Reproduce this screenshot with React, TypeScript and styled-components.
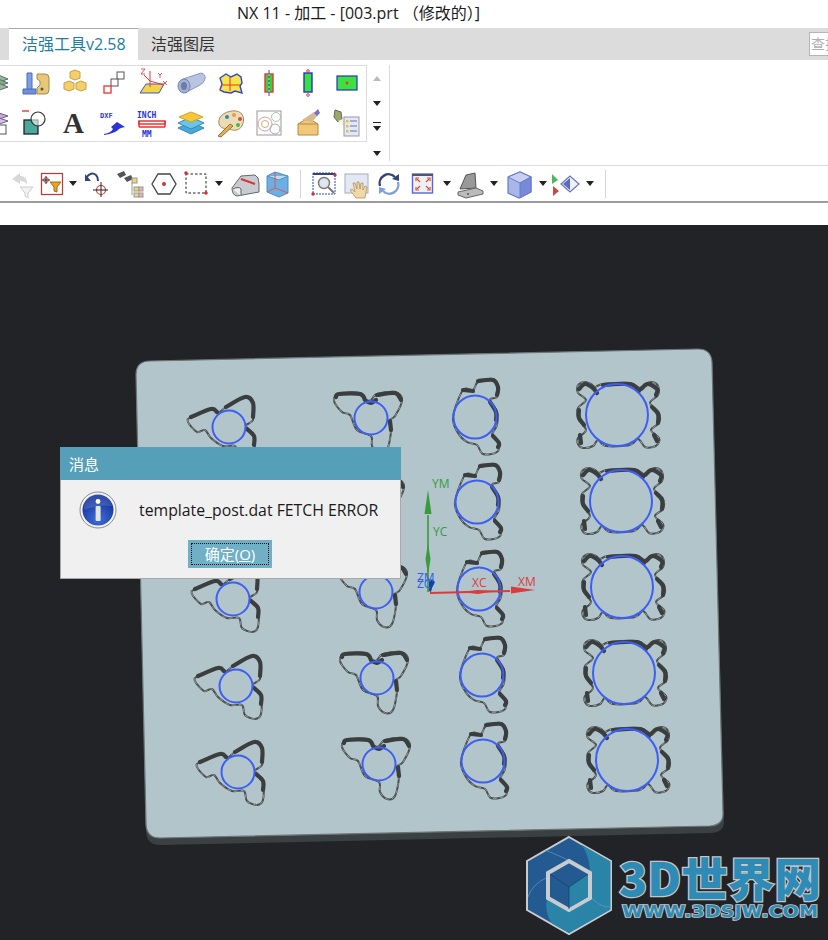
import React from "react";
import styled, { createGlobalStyle } from "styled-components";

const GlobalStyle = createGlobalStyle`
  html, body {
    margin: 0;
    padding: 0;
    background: #fff;
    font-family: "Open Sans", "Noto Sans CJK SC", sans-serif;
  }
  #root { width: 828px; height: 940px; overflow: hidden; }
`;

const Page = styled.div`
  width: 828px;
  height: 940px;
  display: flex;
  flex-direction: column;
  overflow: hidden;
`;

const TitleBar = styled.div`
  height: 28px;
  line-height: 27px;
  padding-left: 237px;
  font-size: 16px;
  color: #1a1a1a;
  white-space: nowrap;
`;

const TabBar = styled.div`
  height: 32px;
  background: #dcdcdc;
  display: flex;
  align-items: stretch;
  padding-left: 9px;
  font-size: 16px;
`;

const Tab = styled.div`
  padding: 0 13px;
  line-height: 33px;
  color: #333;
  white-space: nowrap;
`;

const ActiveTab = styled(Tab)`
  width: 129px;
  box-sizing: border-box;
  padding: 0 13px;
  background: #fff;
  border-top: 1px solid #aaa;
  line-height: 31px;
  color: #1c7da3;
`;

const SearchBox = styled.div`
  margin: 4px 0 4px auto;
  width: 19px;
  box-sizing: border-box;
  background: #fff;
  border: 1px solid #b5b5b5;
  border-right: none;
  font-size: 14px;
  line-height: 22px;
  color: #b0b0b0;
  padding-left: 1px;
  white-space: nowrap;
  overflow: hidden;
`;

const Ribbon = styled.div`
  height: 105px;
  box-sizing: border-box;
  padding-top: 5px;
  background: #fff;
  display: flex;
`;

const Gallery = styled.div`
  width: 367px;
  height: 77px;
  box-sizing: border-box;
  border: 1px solid #dcdcdc;
  border-left: none;
  overflow: hidden;
`;

const GalleryGrid = styled.div`
  margin-left: -24px;
  display: grid;
  grid-template-columns: repeat(10, 39px);
  grid-auto-rows: 34px;
  row-gap: 6px;
`;

const GalleryCell = styled.div`
  display: flex;
  align-items: center;
  justify-content: center;
`;

const IconSvg = styled.svg`
  width: 32px;
  height: 32px;
  flex: none;
  display: block;
`;

const GalleryGlyph = styled.div`
  font-family: "Liberation Serif", serif;
  font-size: 29px;
  font-weight: 700;
  line-height: 32px;
  color: #333;
`;

const SmallLabel = styled.text<{ $size: number; $color: string }>`
  font-family: "DejaVu Sans Mono", monospace;
  font-size: ${(p) => p.$size}px;
  font-weight: 700;
  fill: ${(p) => p.$color};
`;

const Scroller = styled.div`
  width: 20px;
  height: 100px;
  margin-right: 2px;
  display: flex;
  flex-direction: column;
  align-items: center;
  gap: 20px;
  padding-top: 11px;
  box-sizing: border-box;
`;

const UpArrow = styled.div`
  width: 0;
  height: 0;
  flex: none;
  border-left: 4px solid transparent;
  border-right: 4px solid transparent;
  border-bottom: 5px solid #bbb;
`;

const DownArrow = styled.div`
  width: 0;
  height: 0;
  flex: none;
  border-left: 4px solid transparent;
  border-right: 4px solid transparent;
  border-top: 5px solid #222;
`;

const LastArrow = styled(DownArrow)`
  position: relative;
  &::before {
    content: "";
    position: absolute;
    left: -4px;
    top: -9px;
    width: 8px;
    height: 1px;
    background: #222;
  }
`;

const RibbonDivider = styled.div`
  width: 1px;
  height: 96px;
  background: #dcdcdc;
`;

const Toolbar = styled.div`
  height: 38px;
  box-sizing: border-box;
  border-top: 1px solid #dcdcdc;
  border-bottom: 2px solid #9b9b9b;
  padding-left: 5px;
  display: flex;
  align-items: center;
`;

const ToolSlot = styled.div<{ $w: number }>`
  width: ${(p) => p.$w}px;
  flex: none;
  height: 32px;
  display: flex;
  align-items: center;
  justify-content: center;
`;

const ToolSeparator = styled.div`
  width: 1px;
  height: 28px;
  background: #d5d5d5;
`;

const Gap = styled.div`
  height: 22px;
  background: #fff;
`;

const Viewport = styled.div`
  position: relative;
  height: 715px;
  background: #212327;
`;

const SceneSvg = styled.svg`
  display: block;
  width: 828px;
  height: 715px;
`;

const AxisLabel = styled.text<{ $color: string }>`
  font-family: "Open Sans", sans-serif;
  font-size: 12px;
  fill: ${(p) => p.$color};
`;

const LogoTitle = styled.text`
  font-family: "Noto Sans CJK SC", sans-serif;
  font-size: 46px;
  font-weight: 900;
  fill: #2e8bb5;
  stroke: #c4c6c8;
  stroke-width: 2.5px;
  paint-order: stroke;
`;

const LogoUrl = styled.text`
  font-family: "DejaVu Sans", sans-serif;
  font-size: 15px;
  font-weight: 700;
  fill: #2e8bb5;
  stroke: #c4c6c8;
  stroke-width: 1.6px;
  paint-order: stroke;
`;

const Dialog = styled.div`
  position: absolute;
  left: 60px;
  top: 222px;
  width: 341px;
  height: 132px;
  box-sizing: border-box;
  background: #f0f0f0;
  border: 1px solid #a9a9a9;
  border-top: none;
`;

const DialogTitle = styled.div`
  height: 33px;
  margin: 0 -1px;
  padding-left: 9px;
  background: #559fb8;
  color: #fff;
  font-size: 15px;
  line-height: 34px;
`;

const DialogMessage = styled.div`
  display: flex;
  align-items: center;
  gap: 22px;
  padding: 11px 0 0 18px;
`;

const InfoSvg = styled.svg`
  width: 38px;
  height: 38px;
  flex: none;
`;

const MessageText = styled.div`
  font-size: 15.8px;
  color: #1a1a1a;
  white-space: nowrap;
`;

const OkButton = styled.div`
  width: 84px;
  height: 28px;
  box-sizing: border-box;
  margin: 11px 0 0 127px;
  padding: 3px;
  background: #6fb0c6;
`;

const OkInner = styled.div`
  height: 100%;
  box-sizing: border-box;
  border: 1px dotted #111;
  color: #fff;
  font-size: 15px;
  line-height: 20px;
  text-align: center;
`;

type Pt = [number, number];

// closed catmull-rom through the traced outline points
const smooth = (pts: Pt[], closed = true) => {
  const n = pts.length;
  const at = (i: number) => (closed ? pts[(i + n) % n] : pts[Math.max(0, Math.min(n - 1, i))]);
  let d = `M${pts[0][0]} ${pts[0][1]}`;
  const last = closed ? n : n - 1;
  for (let i = 0; i < last; i++) {
    const [p0, p1, p2, p3] = [at(i - 1), at(i), at(i + 1), at(i + 2)];
    const c1x = p1[0] + (p2[0] - p0[0]) / 6;
    const c1y = p1[1] + (p2[1] - p0[1]) / 6;
    const c2x = p2[0] - (p3[0] - p1[0]) / 6;
    const c2y = p2[1] - (p3[1] - p1[1]) / 6;
    d += ` C${c1x.toFixed(1)} ${c1y.toFixed(1)} ${c2x.toFixed(1)} ${c2y.toFixed(1)} ${p2[0]} ${p2[1]}`;
  }
  return d + (closed ? " Z" : "");
};

const partTypes: Record<string, { r: number; outline: Pt[]; thick: Pt[][] }> = {
  a: {
    r: 16.5,
    outline: [[-41, -5], [-38, -10], [-18, -18], [-11, -14], [-3, -20], [16, -30], [24, -24], [24, -7], [17, -1], [25, 9], [25, 28], [19, 33], [9, 29], [6, 19], [-6, 19], [-18, 11], [-24, 3], [-32, 5]],
    thick: [[[-38, -10], [-18, -18], [-12, -15]], [[-3, -20], [16, -30], [24, -24], [24, -10]], [[18, 2], [25, 9], [25, 18]]],
  },
  b: {
    r: 16.5,
    outline: [[-37, -17], [-32, -24], [-11, -25], [-5, -18], [0, -18], [6, -24], [24, -26], [31, -18], [24, -2], [18, 3], [20, 13], [16, 32], [8, 35], [1, 28], [0, 18], [-14, 12], [-21, -3], [-29, -6]],
    thick: [[[-35, -21], [-32, -24], [-11, -24], [-6, -18]], [[-5, -17], [0, -15], [5, -18]], [[6, -23], [24, -25], [30, -18]], [[19, 3], [20, 12]]],
  },
  c: {
    r: 21.5,
    outline: [[-22, 0], [-12, -27], [-2, -27], [3, -35], [18, -38], [23, -30], [22, -20], [15, -17], [22, -5], [22, 8], [17, 18], [24, 25], [22, 35], [8, 37], [2, 28], [-8, 25], [-17, 16]],
    thick: [[[3, -36], [18, -37], [23, -30], [22, -22]], [[-12, -27], [-2, -26]], [[15, -15], [21, -5], [21, 3]], [[18, 19], [24, 26], [23, 30]]],
  },
  d: {
    r: 31,
    outline: [[-40, -27], [-38, -31], [-32, -33], [-26, -31], [-22, -28], [-14, -31], [13, -32], [23, -27], [28, -31], [35, -33], [41, -29], [41, -20], [33, -12], [42, -2], [42, 8], [34, 15], [42, 23], [41, 29], [36, 32], [28, 32], [21, 24], [13, 30], [-11, 31], [-19, 25], [-24, 31], [-34, 33], [-39, 29], [-39, 23], [-31, 15], [-39, 3], [-39, -7], [-31, -15], [-39, -22]],
    thick: [[[-38, -26], [-32, -31], [-24, -27], [-20, -22]], [[-14, -30], [13, -31], [22, -24]], [[24, -26], [31, -31], [40, -26], [39, -20]], [[-38, -5], [-38, 3], [-33, 10]], [[35, -8], [41, -1], [41, 8]], [[-37, 20], [-36, 28]], [[37, 20], [40, 26]]],
  },
};

const parts: { t: string; x: number; y: number }[] = [
  { t: "a", x: 229, y: 427 }, { t: "a", x: 231, y: 513 }, { t: "a", x: 233, y: 599 }, { t: "a", x: 236, y: 686 }, { t: "a", x: 238, y: 772 },
  { t: "b", x: 371, y: 418 }, { t: "b", x: 373, y: 505 }, { t: "b", x: 376, y: 592 }, { t: "b", x: 377, y: 678 }, { t: "b", x: 379, y: 764 },
  { t: "c", x: 475, y: 417 }, { t: "c", x: 477, y: 502 }, { t: "c", x: 479, y: 589 }, { t: "c", x: 482, y: 675 }, { t: "c", x: 483, y: 761 },
  { t: "d", x: 617, y: 415 }, { t: "d", x: 621, y: 501 }, { t: "d", x: 622, y: 587 }, { t: "d", x: 624, y: 673 }, { t: "d", x: 627, y: 760 },
];

const Part = ({ t, x, y }: { t: string; x: number; y: number }) => {
  const spec = partTypes[t];
  const d = smooth(spec.outline);
  return (
    <g transform={`translate(${x} ${y})`} fill="none" strokeLinejoin="round" strokeLinecap="round">
      <path d={d} stroke="#4a4e4f" strokeWidth={2} />
      <path d={d} stroke="#a9b4b6" strokeWidth={0.7} strokeDasharray="3 4" />
      {spec.thick.map((seg, i) => (
        <path key={i} d={smooth(seg, false)} stroke="#3a3e3f" strokeWidth={4.2} />
      ))}
      <circle r={spec.r} stroke="#3d5ef5" strokeWidth={2} />
    </g>
  );
};

const Svg = ({ children }: { children: React.ReactNode }) => (
  <IconSvg viewBox="0 0 32 32">{children}</IconSvg>
);

const galleryIcons: React.ReactNode[] = [
  <Svg>
    <path d="M2 12l14-5 12 5-14 5z" fill="#8fbf8f" stroke="#667" />
    <path d="M2 16l14-5 12 5-14 5z" fill="#7fae86" stroke="#667" />
    <path d="M2 20l14-5 12 5-14 5z" fill="#8fbf8f" stroke="#667" />
  </Svg>,
  <Svg>
    <path d="M8 6h5v18H8z" fill="#7f9fe0" stroke="#4a68b8" />
    <path d="M4 22h13v5H4z" fill="#6f90d8" stroke="#4a68b8" />
    <path d="M18 7h8q4 0 4 4v12q0 4-4 4h-8v-6l3-3v-4l-3-2z" fill="#e8c878" stroke="#a58a4a" />
    <circle cx="23" cy="22" r="1.5" fill="#555" />
  </Svg>,
  <Svg>
    <path d="M12 5l5-2 5 2v6l-5 2-5-2z" fill="#f2cf6c" stroke="#c9a040" />
    <path d="M6 16l5-2 5 2v6l-5 2-5-2z" fill="#f2cf6c" stroke="#c9a040" />
    <path d="M18 16l5-2 5 2v6l-5 2-5-2z" fill="#f2cf6c" stroke="#c9a040" />
  </Svg>,
  <Svg>
    <rect x="20" y="5" width="7" height="7" fill="#fff" stroke="#555" />
    <rect x="14" y="12" width="7" height="7" fill="#fff" stroke="#555" />
    <rect x="7" y="19" width="7" height="7" fill="#fff" stroke="#e33" strokeWidth="1.3" />
  </Svg>,
  <Svg>
    <path d="M4 26l6-9h18l-5 9z" fill="#f0d44a" stroke="#4455bb" />
    <path d="M14 4v16M14 14l14 4M14 14l-6-6" stroke="#e33" fill="none" />
    <path d="M5 2h4l-4 5h4M22 6l2 2 2-2M24 8v3M27 14l4 4M31 14l-4 4" stroke="#d44" fill="none" strokeWidth="0.9" />
  </Svg>,
  <Svg>
    <path d="M8 12L26 6q5 1 4 6-1 4-5 6L10 26z" fill="#b9c4e4" stroke="#8c99bc" />
    <ellipse cx="9" cy="19" rx="6" ry="7" fill="#a3b1d8" stroke="#7482ab" />
    <ellipse cx="9" cy="19" rx="3" ry="4" fill="#6d7ca6" />
  </Svg>,
  <Svg>
    <path d="M6 11l6-4 5 3 6-3 4 3 1 6-2 3 2 7-7-2-4 2-7-1-4-2 2-6z" fill="#f4e54a" stroke="#3344cc" strokeWidth="1.4" />
    <path d="M16 10v14M7 18h19" stroke="#e33" strokeWidth="1" />
  </Svg>,
  <Svg>
    <rect x="12" y="7" width="8" height="18" fill="#38d040" stroke="#e33" strokeWidth="1.4" />
    <path d="M16 3v26" stroke="#2f45d0" strokeWidth="1" />
    <path d="M16 7v18" stroke="#ff0" strokeWidth="1" strokeDasharray="2 2" />
  </Svg>,
  <Svg>
    <rect x="12" y="6" width="8" height="19" fill="#38e040" stroke="#2233cc" strokeWidth="1.4" />
    <circle cx="16" cy="4" r="1.3" fill="none" stroke="#e33" />
    <circle cx="16" cy="28" r="1.3" fill="none" stroke="#e33" />
  </Svg>,
  <Svg>
    <rect x="6" y="9" width="20" height="14" fill="#3ee040" stroke="#2233cc" strokeWidth="1.2" />
    <circle cx="16" cy="16" r="1.4" fill="#e33" />
  </Svg>,
];

const galleryIcons2: React.ReactNode[] = [
  <Svg>
    <path d="M2 9l14-4 12 4-14 5z" fill="#c9a4e6" stroke="#667" />
    <path d="M2 14l14-4 12 4-14 5z" fill="#d9c0ec" stroke="#667" />
    <rect x="2" y="18" width="24" height="9" fill="#fff" stroke="#555" />
  </Svg>,
  <Svg>
    <rect x="5" y="13" width="14" height="14" fill="#4aa89c" stroke="#222" strokeWidth="1.3" />
    <circle cx="19" cy="12" r="7" fill="#fff" fillOpacity="0.6" stroke="#333" strokeWidth="1.2" />
    <path d="M3 4h7" stroke="#e33" strokeWidth="1.4" />
  </Svg>,
  <GalleryGlyph>A</GalleryGlyph>,
  <Svg>
    <SmallLabel x="3" y="11" $size={7} $color="#2a34d8">DXF</SmallLabel>
    <path d="M7 27q7-1 9-5l-2-2 6-5 8 5-4 1-2 1q-3 4-15 6z" fill="#2a34d8" />
  </Svg>,
  <Svg>
    <SmallLabel x="1" y="11" $size={8} $color="#2a34d8">INCH</SmallLabel>
    <path d="M3 14h26v3H3zM3 20h26" stroke="#e33" strokeWidth="1.5" fill="none" />
    <path d="M3 14v6M29 14v6" stroke="#e33" strokeWidth="1.5" />
    <SmallLabel x="6" y="30" $size={8} $color="#2a34d8">MM</SmallLabel>
  </Svg>,
  <Svg>
    <path d="M3 21l13-6 13 6-13 6z" fill="#48a9d8" stroke="#3388bb" />
    <path d="M3 16l13-6 13 6-13 6z" fill="#6cc4e4" stroke="#3388bb" />
    <path d="M4 10l12-5 12 5-12 5z" fill="#f6c838" stroke="#d9a020" />
  </Svg>,
  <Svg>
    <path d="M5 17C3 8 14 3 22 4c8 1 9 9 6 15-3 5-9 5-12 3-3-2-8 2-11-5z" fill="#eadcb8" stroke="#a68a56" />
    <circle cx="13" cy="10" r="2" fill="#38a" />
    <circle cx="20" cy="8" r="2" fill="#e94" />
    <circle cx="26" cy="12" r="2" fill="#d44" />
    <circle cx="24" cy="18" r="2" fill="#4b4" />
    <path d="M4 29l12-12 3 2-12 11z" fill="#e0b050" stroke="#987030" />
  </Svg>,
  <Svg>
    <rect x="4" y="4" width="24" height="24" fill="#fff" stroke="#aaa" strokeWidth="1.2" />
    <circle cx="12" cy="17" r="7" fill="none" stroke="#d9a0a0" />
    <circle cx="12" cy="17" r="3.5" fill="none" stroke="#c9b080" />
    <circle cx="23" cy="10" r="4.5" fill="none" stroke="#a0c8a8" />
    <circle cx="22" cy="22" r="5" fill="none" stroke="#a0a8c8" />
  </Svg>,
  <Svg>
    <path d="M6 17l10-6 10 6v11H6z" fill="#f0c878" stroke="#b58a40" />
    <path d="M6 17h20" stroke="#b58a40" />
    <path d="M10 13l12-8 4 3-6 7z" fill="#d8b890" />
    <path d="M22 6l4-4 2 4-3 3z" fill="#6f70c8" />
  </Svg>,
  <Svg>
    <path d="M4 3l6 2 1 7-4 3-4-5z" fill="#9aa86a" stroke="#666" />
    <path d="M7 14l9 8V10z" fill="#fbf5c8" />
    <rect x="13" y="10" width="15" height="19" fill="#e4e8f4" stroke="#8f98b8" />
    <path d="M19 14h7M19 19h7M19 24h7" stroke="#6a7298" />
    <rect x="15" y="13" width="2.5" height="2.5" fill="#e8c040" />
    <rect x="15" y="18" width="2.5" height="2.5" fill="#e8c040" />
    <rect x="15" y="23" width="2.5" height="2.5" fill="#e8c040" />
  </Svg>,
];

const toolIcons: Record<string, React.ReactNode> = {
  undoFilter: (
    <Svg>
      <path d="M15 5l-8 6 8 5v-3q6 0 7 4 1-9-7-9z" fill="#d8d8d8" />
      <path d="M15 19h13l-5 6v5l-3-2v-3z" fill="#f2f2f2" stroke="#ccc" />
    </Svg>
  ),
  selFilter: (
    <Svg>
      <rect x="5.5" y="5.5" width="21" height="21" fill="#fff" stroke="#c33" strokeWidth="1.2" />
      <path d="M10 8v8M6 12h8" stroke="#222" />
      <circle cx="10" cy="12" r="2.4" fill="none" stroke="#a33" />
      <path d="M14 14h11l-4 5v5l-3-1v-4z" fill="#f0a020" stroke="#a86a10" />
    </Svg>
  ),
  rotatePoint: (
    <Svg>
      <path d="M5 10q5-7 10-3 2 2 2 6" fill="none" stroke="#33447a" strokeWidth="2" />
      <path d="M4 6v7h6z" fill="#33447a" />
      <circle cx="20" cy="22" r="4.5" fill="none" stroke="#d33" strokeWidth="1.2" />
      <path d="M20 14v15M12 22h15" stroke="#222" />
    </Svg>
  ),
  binoculars: (
    <Svg>
      <path d="M3 6l7-3 2 4-6 3zM10 10l7-3 2 4-6 3z" fill="#555" />
      <rect x="18" y="10" width="5" height="5" fill="#e8d878" stroke="#999" />
      <rect x="20" y="19" width="5" height="4" fill="#e8d878" stroke="#999" />
      <rect x="25" y="19" width="4" height="4" fill="#f0b0b0" stroke="#999" />
      <rect x="20" y="25" width="5" height="4" fill="#e8d878" stroke="#999" />
      <rect x="25" y="25" width="4" height="4" fill="#f0b0b0" stroke="#999" />
      <path d="M18 15v12" stroke="#999" />
    </Svg>
  ),
  hexagon: (
    <Svg>
      <path d="M10 6h12l6 10-6 10H10L4 16z" fill="#fff" stroke="#444" strokeWidth="1.3" />
      <circle cx="16" cy="16" r="2" fill="#c33" />
    </Svg>
  ),
  rectSelect: (
    <Svg>
      <rect x="6" y="6" width="20" height="19" fill="none" stroke="#222" strokeDasharray="2.5 2" />
      <circle cx="6" cy="5" r="1.8" fill="#c33" />
      <circle cx="26" cy="25" r="1.8" fill="#c33" />
    </Svg>
  ),
  sheet: (
    <Svg>
      <path d="M3 20l9-12 14-1q4 2 4 8v9l-22 4q-5-1-5-8z" fill="#c8ccd0" stroke="#666" />
      <path d="M12 11l14 5" stroke="#d33" strokeWidth="2" />
      <path d="M4 21q6-3 8 0v7" stroke="#666" fill="#eee" />
    </Svg>
  ),
  box: (
    <Svg>
      <path d="M6 8l8-4 13 4v17l-9 4-12-5z" fill="#6ab0e4" stroke="#5a8ac0" />
      <path d="M6 8l12 4 9-4" fill="#c0dcf2" stroke="#5a8ac0" />
      <path d="M14 4v16l13 5M14 20l-8 4" stroke="#e25555" fill="none" />
    </Svg>
  ),
  zoomBox: (
    <Svg>
      <rect x="5" y="5" width="22" height="21" fill="#fff" stroke="#3344cc" strokeDasharray="2 1" />
      <path d="M5 5h22v2H5z" fill="#33447a" />
      <circle cx="16" cy="15" r="5.5" fill="#e0e4ee" stroke="#777" strokeWidth="1.4" />
      <path d="M20 19l6 6" stroke="#777" strokeWidth="2" />
      <circle cx="27" cy="7" r="1.7" fill="#c33" />
      <circle cx="5" cy="26" r="1.7" fill="#c33" />
    </Svg>
  ),
  hand: (
    <Svg>
      <rect x="4" y="6" width="23" height="19" fill="#e4e8f2" stroke="#a4acc4" />
      <path d="M15 30l-6-8 2-1 3 3-2-9 2 0 2 6 0-7 2 0 1 7 1-6 2 0 0 7 2-4 2 1-2 11z" fill="#f0d8a8" stroke="#a88a58" strokeWidth="0.7" />
    </Svg>
  ),
  refresh: (
    <Svg>
      <path d="M7 18A9 9 0 0 1 22 9" fill="none" stroke="#33447a" strokeWidth="2.4" />
      <path d="M25 14A9 9 0 0 1 10 23" fill="none" stroke="#7f9fd8" strokeWidth="2.4" />
      <path d="M19 11l7 2V6z" fill="#33447a" />
      <path d="M13 21l-7-2v7z" fill="#7f9fd8" />
    </Svg>
  ),
  fit: (
    <Svg>
      <rect x="5.5" y="6" width="20" height="19" fill="#eef0f8" stroke="#5566dd" strokeWidth="1.4" />
      <path d="M5 6h21v2H5z" fill="#556" />
      <path d="M10 11l3 3M22 11l-3 3M10 21l3-3M22 21l-3-3" stroke="#d9502a" strokeWidth="1.2" />
      <path d="M9 13v-3h3M23 13v-3h-3M9 19v3h3M23 19v3h-3" fill="none" stroke="#d9502a" strokeWidth="1.2" />
    </Svg>
  ),
  laptop: (
    <Svg>
      <path d="M5 21L11 7l9-2 1 15z" fill="#999" stroke="#555" />
      <path d="M3 24l18-4 7 3v3l-17 4-8-3z" fill="#bbb" stroke="#666" />
      <circle cx="13" cy="26" r="1" fill="#555" />
    </Svg>
  ),
  solid: (
    <Svg>
      <path d="M4 9l12-5 11 5v15l-12 6-11-5z" fill="#a9b6ec" stroke="#6a7acc" strokeWidth="1.2" />
      <path d="M4 9l12 6 11-6-11-5z" fill="#c8d0f2" stroke="#6a7acc" />
      <path d="M16 15v15l11-6V9z" fill="#7889d8" stroke="#6a7acc" />
    </Svg>
  ),
  nav: (
    <Svg>
      <path d="M2 6l6 6-6 4z" fill="#4cb860" />
      <path d="M3 18l6 5-6 5z" fill="#c84a44" />
      <path d="M11 16l9-8 9 8-9 8z" fill="#eef0fa" stroke="#6a72b8" strokeWidth="1.2" />
      <path d="M20 10v12l-7-6z" fill="#5a68c8" />
    </Svg>
  ),
};

type Slot = { w: number; icon?: string; drop?: boolean; sep?: boolean };

const toolbar: Slot[] = [
  { w: 32, icon: "undoFilter" }, { w: 30, icon: "selFilter" }, { w: 12, drop: true },
  { w: 36, icon: "rotatePoint" }, { w: 30, icon: "binoculars" }, { w: 38, icon: "hexagon" },
  { w: 26, icon: "rectSelect" }, { w: 20, drop: true }, { w: 32, icon: "sheet" }, { w: 32, icon: "box" },
  { w: 14, sep: true }, { w: 34, icon: "zoomBox" }, { w: 32, icon: "hand" }, { w: 32, icon: "refresh" },
  { w: 36, icon: "fit" }, { w: 12, drop: true }, { w: 36, icon: "laptop" }, { w: 10, drop: true },
  { w: 42, icon: "solid" }, { w: 4, drop: true }, { w: 42, icon: "nav" }, { w: 6, drop: true }, { w: 24, sep: true },
];

const Logo = () => (
  <g>
    <path d="M569 837l42 24v49l-42 24-42-24v-49z" fill="#245a92" stroke="#c9cccf" strokeWidth="2" />
    <path d="M582 845L610.500 861.500V909.500L569 933L552 923.500Q544 912 547 898L569 910L590 898V873Q590 858 582 845Z" fill="#2a84a8" />
    <path d="M590 896Q600 908 611 907M528 897Q532 884 548 877M545 850Q560 856 570 861" fill="none" stroke="#5f9cc0" strokeWidth="0.7" />
    <path d="M569 861l21 12v25l-21 12-21-12v-25z" fill="#245a92" stroke="#c9cccf" strokeWidth="4" />
    <path d="M569 887v21l19-11v-23z" fill="#2a84a8" />
    <path d="M550 874l19 13 19-13M569 887v22" fill="none" stroke="#1d3f6a" strokeWidth="0.8" />
    <LogoTitle x="619" y="896" textLength="202" lengthAdjust="spacingAndGlyphs">3D世界网</LogoTitle>
    <LogoUrl x="622" y="917" textLength="196" lengthAdjust="spacingAndGlyphs">WWW.3DSJW.COM</LogoUrl>
  </g>
);

const Scene = () => (
  <SceneSvg viewBox="0 225 828 715">
    <path d="M150 368L698 356Q711 356 712 369L724 820Q725 833 710 833L160 845Q147 845 146 832L136 382Q136 368 150 368Z" fill="#3b4143" />
    <path d="M150 361L698 349Q711 349 712 362L723 812Q724 825 710 826L160 838Q147 838 146 825L136 375Q136 361 150 361Z" fill="#b2c5cb" stroke="#6d7476" strokeWidth="1.2" />
    {parts.map((p, i) => (
      <Part key={i} {...p} />
    ))}
    <path d="M428 592L428 515" stroke="#3a9a3e" strokeWidth="1.6" />
    <path d="M428 490l3.500 24h-7z" fill="#3a9a3e" />
    <path d="M428 543l2.500 16-2.500 16-2.500-16z" fill="#3a9a3e" />
    <path d="M430 593L510 591" stroke="#df3a3a" strokeWidth="1.8" />
    <path d="M535 590l-24-3.500v7z" fill="#df3a3a" />
    <path d="M460 592l18-2 18 1-18 3z" fill="#df3a3a" />
    <path d="M429 591v-9l3-3 3 3-3 6-1 4z" fill="#1540a8" />
    <AxisLabel x="432" y="488" $color="#3a9a3e">YM</AxisLabel>
    <AxisLabel x="433" y="536" $color="#3a9a3e">YC</AxisLabel>
    <AxisLabel x="472" y="587" $color="#df3a3a">XC</AxisLabel>
    <AxisLabel x="518" y="586" $color="#df3a3a">XM</AxisLabel>
    <AxisLabel x="417" y="582" $color="#2f5fe8">ZM</AxisLabel>
    <AxisLabel x="417" y="588" $color="#2f5fe8">ZC</AxisLabel>
    <Logo />
  </SceneSvg>
);

const InfoIcon = () => (
  <InfoSvg viewBox="0 0 38 38">
    <defs>
      <radialGradient id="infoBlue" cx="50%" cy="80%" r="70%">
        <stop offset="0%" stopColor="#3f6fd8" />
        <stop offset="100%" stopColor="#12329a" />
      </radialGradient>
    </defs>
    <circle cx="19" cy="19" r="18" fill="#f4f4f4" stroke="#8a8a8a" />
    <circle cx="19" cy="19" r="15.5" fill="url(#infoBlue)" />
    <path d="M5 19a14 14 0 0 1 28-4q-14-2-28 4z" fill="#fff" fillOpacity="0.14" />
    <circle cx="19" cy="10.5" r="2.4" fill="#fff" />
    <rect x="16.6" y="15" width="5" height="15" rx="1" fill="#e4e4e4" />
  </InfoSvg>
);

export default function App() {
  return (
    <Page>
      <GlobalStyle />
      <TitleBar>NX 11 - 加工 - [003.prt （修改的）]</TitleBar>
      <TabBar>
        <ActiveTab>洁强工具v2.58</ActiveTab>
        <Tab>洁强图层</Tab>
        <SearchBox>查找</SearchBox>
      </TabBar>
      <Ribbon>
        <Gallery>
          <GalleryGrid>
            {[...galleryIcons, ...galleryIcons2].map((icon, i) => (
              <GalleryCell key={i}>{icon}</GalleryCell>
            ))}
          </GalleryGrid>
        </Gallery>
        <Scroller>
          <UpArrow />
          <DownArrow />
          <LastArrow />
          <DownArrow />
        </Scroller>
        <RibbonDivider />
      </Ribbon>
      <Toolbar>
        {toolbar.map((s, i) => (
          <ToolSlot key={i} $w={s.w}>
            {s.icon && toolIcons[s.icon]}
            {s.drop && <DownArrow />}
            {s.sep && <ToolSeparator />}
          </ToolSlot>
        ))}
      </Toolbar>
      <Gap />
      <Viewport>
        <Scene />
        <Dialog>
          <DialogTitle>消息</DialogTitle>
          <DialogMessage>
            <InfoIcon />
            <MessageText>template_post.dat FETCH ERROR</MessageText>
          </DialogMessage>
          <OkButton>
            <OkInner>
              确定(<u>O</u>)
            </OkInner>
          </OkButton>
        </Dialog>
      </Viewport>
    </Page>
  );
}
